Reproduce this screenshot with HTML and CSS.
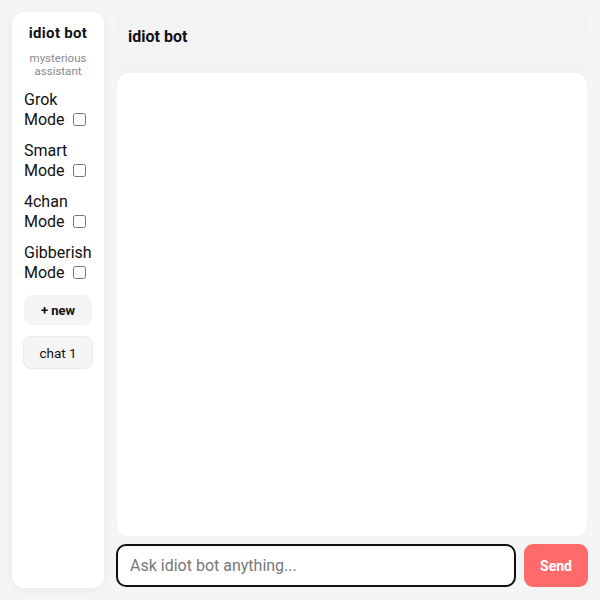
FILE: index.html
```html
<!DOCTYPE html>
<html>
<head>
<meta charset="utf-8">
<link rel="stylesheet" href="styles.css">
</head>
<body>
<div class="app">
  <aside class="sidebar">
    <div class="brand">idiot bot</div>
    <div class="tagline">mysterious assistant</div>
    <label class="mode">Grok Mode <input type="checkbox"></label>
    <label class="mode">Smart Mode <input type="checkbox"></label>
    <label class="mode">4chan Mode <input type="checkbox"></label>
    <label class="mode">Gibberish Mode <input type="checkbox"></label>
    <button class="new-btn">+ new</button>
    <button class="chat-btn">chat 1</button>
  </aside>
  <main class="main">
    <header class="header">idiot bot</header>
    <section class="chat"></section>
    <form class="composer">
      <input class="prompt" type="text" placeholder="Ask idiot bot anything...">
      <button class="send" type="button">Send</button>
    </form>
  </main>
</div>
</body>
</html>
```
FILE: styles.css
```css
* { box-sizing: border-box; }
html, body { margin: 0; height: 100%; }
body {
  background: #f5f5f5;
  font-family: Roboto, "Liberation Sans", sans-serif;
  color: #111;
}
.app {
  display: grid;
  grid-template-columns: 92px 1fr;
  gap: 12px;
  padding: 12px;
  height: 600px;
}
.sidebar {
  background: #fff;
  border-radius: 12px;
  box-shadow: 0 2px 8px rgba(0,0,0,0.05);
  padding: 12px 12px;
  display: flex;
  flex-direction: column;
}
.brand {
  text-align: center;
  font-weight: 700;
  font-size: 15px;
  letter-spacing: 0.3px;
  line-height: 18px;
}
.tagline {
  text-align: center;
  font-size: 11.5px;
  color: #8a8a8a;
  line-height: 13px;
  margin-top: 10px;
}
.mode {
  display: block;
  font-size: 16px;
  line-height: 20px;
  margin-top: 11px;
}
.tagline + .mode { margin-top: 12px; }
.mode input {
  width: 13px;
  height: 13px;
  margin: 0 0 0 4px;
  vertical-align: -1px;
}
.new-btn {
  margin-top: 12px;
  height: 30px;
  border: none;
  border-radius: 8px;
  background: #f4f4f4;
  font-family: inherit;
  font-weight: 700;
  font-size: 13px;
  color: #111;
}
.chat-btn {
  margin: 11px -1px 0;
  height: 33px;
  border: 1px solid #ececec;
  border-radius: 8px;
  background: #f5f5f5;
  font-family: inherit;
  font-size: 13.5px;
  color: #111;
}
.main {
  display: flex;
  flex-direction: column;
  gap: 9px;
  min-width: 0;
}
.header {
  height: 52px;
  background: #f3f3f4;
  border-radius: 12px;
  padding: 15px 12px;
  font-weight: 700;
  font-size: 16px;
  line-height: 20px;
  box-shadow: 0 10px 14px rgba(0,0,0,0.015);
}
.chat {
  flex: 1;
  background: #fff;
  border-radius: 12px;
  box-shadow: 0 0 6px rgba(0,0,0,0.025);
  margin: 0 1px;
}
.composer {
  display: flex;
  gap: 8px;
  margin: -1px 0 1px;
}
.prompt {
  flex: 1;
  height: 43px;
  border: 2px solid #111;
  border-radius: 10px;
  padding: 0 12px;
  font-family: inherit;
  font-size: 16px;
  background: #fff;
}
.prompt::placeholder { color: #777; }
.send {
  width: 64px;
  height: 43px;
  border: none;
  border-radius: 9px;
  background: #ff6b6b;
  color: #fff;
  font-family: inherit;
  font-weight: 700;
  font-size: 14px;
}
```
